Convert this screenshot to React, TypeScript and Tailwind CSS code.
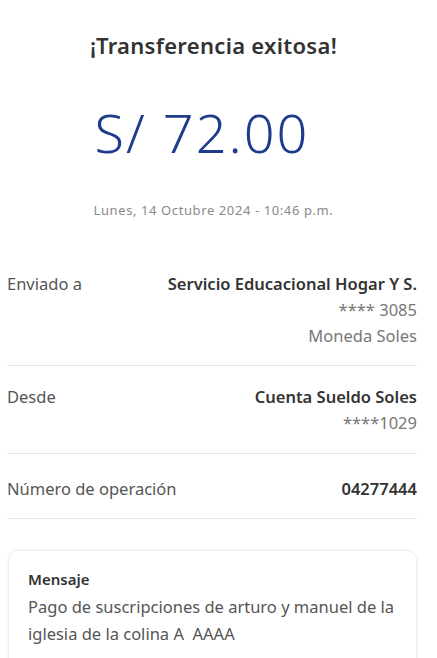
export default function App() {
  return (
    <div className="w-[437px] h-[658px] overflow-hidden bg-white text-[#333]" style={{ fontFamily: '"Noto Sans", sans-serif' }}>
      <div className="pr-[10px]">
        <div className="pt-[30px] text-center text-[22px] font-semibold leading-[30px] tracking-[0.3px] text-[#333]">¡Transferencia exitosa!</div>
        <div className="mt-[42px] pr-[23px] text-center text-[54px] font-light leading-[60px] tracking-[2px] text-[#1f3b8c]">S/ 72.00</div>
        <div className="mt-[40px] text-center text-[13px] leading-[16px] tracking-[0.6px] text-[#8a8a8a]">Lunes, 14 Octubre 2024 - 10:46 p.m.</div>
      </div>

      <div className="mt-[53px] pl-[7px] pr-[20px] text-[16.5px] leading-[26px]">
        <div className="flex justify-between pb-[16px] border-b border-[#e6e6e6]">
          <div className="text-[#555]">Enviado a</div>
          <div className="text-right">
            <div className="font-semibold text-[#333]">Servicio Educacional Hogar Y S.</div>
            <div className="text-[#777]">**** 3085</div>
            <div className="text-[#777]">Moneda Soles</div>
          </div>
        </div>
        <div className="flex justify-between pt-[18px] pb-[17px] border-b border-[#e6e6e6]">
          <div className="text-[#555]">Desde</div>
          <div className="text-right">
            <div className="font-semibold text-[#333]">Cuenta Sueldo Soles</div>
            <div className="text-[#777]">****1029</div>
          </div>
        </div>
        <div className="flex justify-between pt-[22px] pb-[16px] border-b border-[#e6e6e6]">
          <div className="text-[#555]">Número de operación</div>
          <div className="font-semibold text-[#333]">04277444</div>
        </div>
        <div className="mt-[31px] ml-[1px] rounded-[10px] border border-[#eeeeee] shadow-[0_1px_4px_rgba(0,0,0,0.06)] px-[19px] pt-[17px] pb-[20px]">
          <div className="text-[15px] font-semibold leading-[22px] text-[#333]">Mensaje</div>
          <div className="mt-[3px] leading-[27px] text-[#555]">Pago de suscripciones de arturo y manuel de la iglesia de la colina A&nbsp; AAAA</div>
        </div>
      </div>
    </div>
  );
}
